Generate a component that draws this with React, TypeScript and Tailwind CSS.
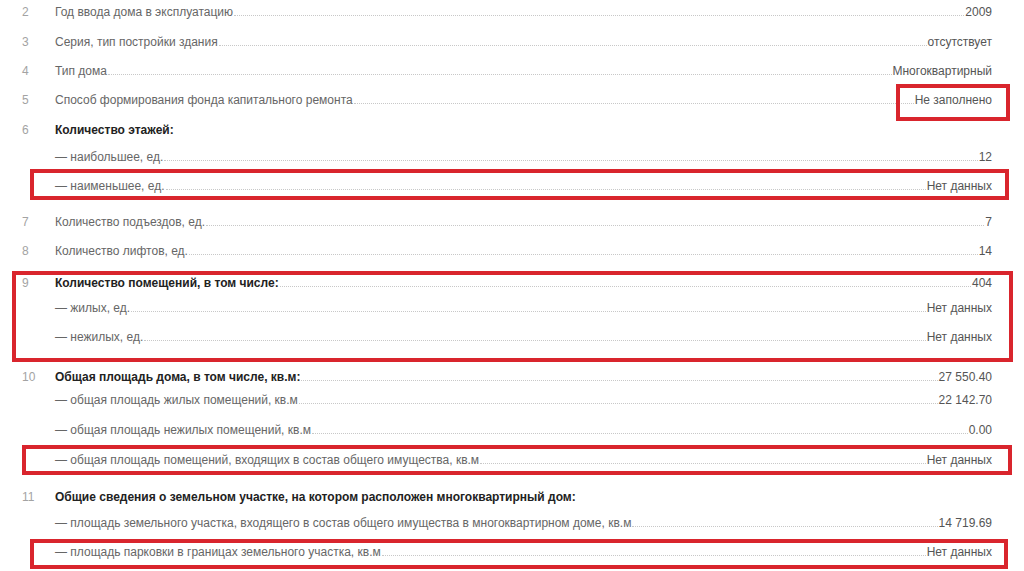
type Row = {
  num?: string;
  label: string;
  value?: string;
  bold?: boolean;
  dots?: boolean;
  gap: string;
  box?: string;
};

const rows: Row[] = [
  { num: "2", label: "Год ввода дома в эксплуатацию", value: "2009", gap: "-mt-[3px]" },
  { num: "3", label: "Серия, тип постройки здания", value: "отсутствует", gap: "mt-[1px]" },
  { num: "4", label: "Тип дома", value: "Многоквартирный", gap: "mt-0" },
  {
    num: "5",
    label: "Способ формирования фонда капитального ремонта",
    value: "Не заполнено",
    gap: "mt-0",
    box: "top-[-1px] bottom-[-7px] left-[896px] right-[14px]",
  },
  { num: "6", label: "Количество этажей:", bold: true, dots: false, gap: "mt-[1px]" },
  { label: "— наибольшее, ед.", value: "12", gap: "-mt-[2px]" },
  {
    label: "— наименьшее, ед.",
    value: "Нет данных",
    gap: "mt-0",
    box: "top-[-2px] bottom-0 left-[30px] right-[15px]",
  },
  { num: "7", label: "Количество подъездов, ед.", value: "7", gap: "mt-[7px]" },
  { num: "8", label: "Количество лифтов, ед.", value: "14", gap: "mt-0" },
];

const group9: Row[] = [
  { num: "9", label: "Количество помещений, в том числе:", value: "404", bold: true, gap: "mt-0" },
  { label: "— жилых, ед.", value: "Нет данных", gap: "-mt-[4px]" },
  { label: "— нежилых, ед.", value: "Нет данных", gap: "mt-0" },
];

const rest: Row[] = [
  { num: "10", label: "Общая площадь дома, в том числе, кв.м:", value: "27 550.40", bold: true, gap: "mt-[11px]" },
  { label: "— общая площадь жилых помещений, кв.м", value: "22 142.70", gap: "-mt-[6px]" },
  { label: "— общая площадь нежилых помещений, кв.м", value: "0.00", gap: "mt-[1px]" },
  {
    label: "— общая площадь помещений, входящих в состав общего имущества, кв.м",
    value: "Нет данных",
    gap: "mt-[1px]",
    box: "top-0 bottom-[-1px] left-[22px] right-[12px]",
  },
  {
    num: "11",
    label: "Общие сведения о земельном участке, на котором расположен многоквартирный дом:",
    bold: true,
    dots: false,
    gap: "mt-[8px]",
  },
  {
    label: "— площадь земельного участка, входящего в состав общего имущества в многоквартирном доме, кв.м",
    value: "14 719.69",
    gap: "-mt-[3px]",
  },
  {
    label: "— площадь парковки в границах земельного участка, кв.м",
    value: "Нет данных",
    gap: "mt-0",
    box: "top-[2px] bottom-[-3px] left-[30px] right-[16px]",
  },
];

function Line({ row }: { row: Row }) {
  const showDots = row.dots !== false;
  return (
    <div className={`relative flex items-center h-[29px] pl-[22px] pr-[32px] ${row.gap}`}>
      <span className="w-[33px] shrink-0 text-[#a3a3a3]">{row.num}</span>
      <span className={row.bold ? "font-bold text-[#222]" : "text-[#666]"}>{row.label}</span>
      {showDots && (
        <div className="flex-1 mx-[1px] translate-y-[4px] border-b border-dotted border-[#c8c8c8]" />
      )}
      {row.value && <span className="text-[#555]">{row.value}</span>}
      {row.box && <div className={`absolute border-[4px] border-[#d9252d] ${row.box}`} />}
    </div>
  );
}

export default function App() {
  return (
    <div className="w-[1024px] h-[571px] overflow-hidden bg-white font-['Liberation_Sans',Arial,sans-serif] text-[12px] leading-none">
      {rows.map((r, i) => (
        <Line key={i} row={r} />
      ))}
      <div className="relative mt-[3px]">
        {group9.map((r, i) => (
          <Line key={i} row={r} />
        ))}
        <div className="absolute top-[3px] bottom-[-11px] left-[12px] right-[11px] border-[4px] border-[#d9252d]" />
      </div>
      {rest.map((r, i) => (
        <Line key={i} row={r} />
      ))}
    </div>
  );
}
